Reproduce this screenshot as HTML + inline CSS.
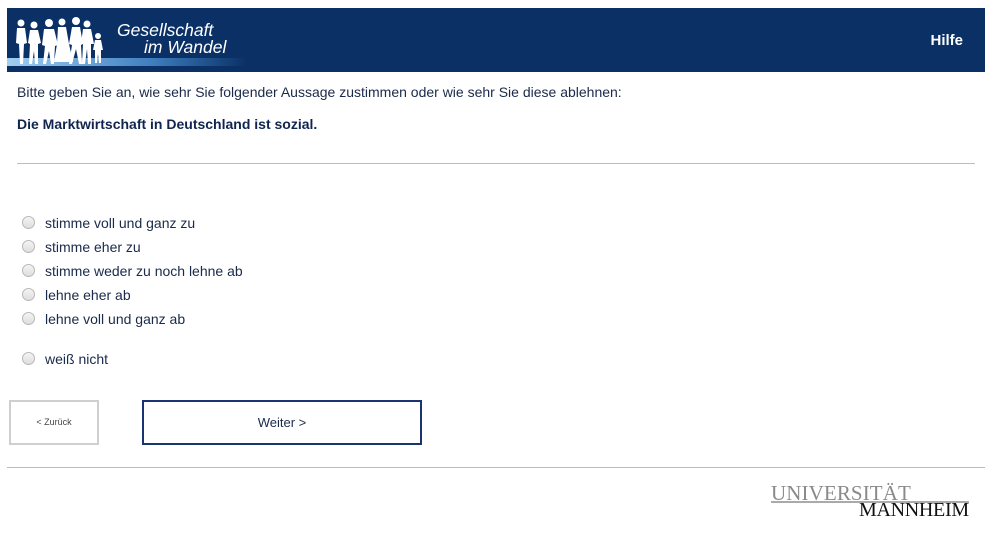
<!DOCTYPE html>
<html><head><meta charset="utf-8"><style>
body{margin:0;background:#fff;font-family:"Liberation Sans",Arial,sans-serif;color:#1a2a4a;width:993px;height:543px;position:relative;overflow:hidden}
.hdr{position:absolute;left:7px;top:8px;width:978px;height:64px;background:#0a3066}
.abs{position:absolute}
.r{position:absolute;left:22px;width:11px;height:11px;border:1px solid #b8b8b8;border-radius:50%;background:linear-gradient(#f4f4f4,#dedede)}
.l{position:absolute;left:45px;font-size:14px;color:#1a2a4a}
</style></head><body>
<div class="hdr">
<svg class="abs" style="left:0;top:0" width="240" height="64">
<defs><linearGradient id="g" x1="0" x2="1"><stop offset="0" stop-color="#9fd0f0"/><stop offset="0.6" stop-color="#3f7fc0"/><stop offset="1" stop-color="#0a3066"/></linearGradient></defs>
<rect x="0" y="50" width="240" height="8" fill="url(#g)"/>
<g fill="#fff">
<circle cx="14" cy="15" r="3.5"/><path d="M10 20h8l2 15-3 1-1 20h-3l-1-20-3-1z"/>
<circle cx="27" cy="17" r="3.5"/><path d="M23 22h8l3 13-3 1 0 20h-3l-1-13-2 13h-3l1-20-2-1z"/>
<circle cx="42" cy="15" r="4"/><path d="M37 21h10l4 16-3 1-1 18h-3l-2-13-3 13h-3l2-18-3-1z"/>
<circle cx="55" cy="14" r="3.5"/><path d="M51 19h8l3 17 4 18h-19l3-18z"/>
<circle cx="69" cy="13" r="4"/><path d="M65 19h8l3 17-2 1 1 19h-3l-3-15-4 15h-3l3-19-3-1z"/>
<circle cx="80" cy="16" r="3.5"/><path d="M76 21h8l3 15-3 0 0 20h-3l-1-15-2 15h-3l1-20-2 0z"/>
<circle cx="91" cy="28" r="3"/><path d="M88 32h6l2 10-2 0 0 13h-2l-1-9-1 9h-2l0-13-2 0z"/>
</g>
<text x="110" y="28" fill="#fff" font-style="italic" font-size="17.5" font-family="Liberation Sans">Gesellschaft</text>
<text x="137" y="45" fill="#fff" font-style="italic" font-size="17.5" font-family="Liberation Sans">im Wandel</text>
</svg>
<div class="abs" style="right:22px;top:24px;color:#fff;font-weight:bold;font-size:15px">Hilfe</div>
</div>
<div class="abs" style="left:17px;top:84px;font-size:14px">Bitte geben Sie an, wie sehr Sie folgender Aussage zustimmen oder wie sehr Sie diese ablehnen:</div>
<div class="abs" style="left:17px;top:116px;font-size:14px;font-weight:bold;color:#0f2550">Die Marktwirtschaft in Deutschland ist sozial.</div>
<div class="abs" style="left:17px;top:163px;width:958px;height:1px;background:#bdbdbd"></div>
<div class="r" style="top:216px"></div><div class="l" style="top:215px">stimme voll und ganz zu</div>
<div class="r" style="top:240px"></div><div class="l" style="top:239px">stimme eher zu</div>
<div class="r" style="top:264px"></div><div class="l" style="top:263px">stimme weder zu noch lehne ab</div>
<div class="r" style="top:288px"></div><div class="l" style="top:287px">lehne eher ab</div>
<div class="r" style="top:312px"></div><div class="l" style="top:311px">lehne voll und ganz ab</div>
<div class="r" style="top:352px"></div><div class="l" style="top:351px">weiß nicht</div>
<div class="abs" style="left:9px;top:400px;width:86px;height:41px;border:2px solid #cfcfcf;font-size:9px;color:#444;text-align:center;line-height:41px">&lt; Zurück</div>
<div class="abs" style="left:142px;top:400px;width:276px;height:41px;border:2px solid #1a3470;font-size:13px;text-align:center;line-height:41px">Weiter &gt;</div>
<div class="abs" style="left:7px;top:467px;width:978px;height:1px;background:#bdbdbd"></div>
<div class="abs" style="left:771px;top:481px;font-family:'Liberation Serif',serif;font-size:21px;color:#8a8a8a;letter-spacing:0.1px">UNIVERSITÄT</div>
<div class="abs" style="left:771px;top:501px;width:198px;height:2px;background:#aaa"></div>
<div class="abs" style="left:859px;top:499px;font-family:'Liberation Serif',serif;font-size:20px;color:#111;letter-spacing:-0.3px">MANNHEIM</div>
</body></html>
